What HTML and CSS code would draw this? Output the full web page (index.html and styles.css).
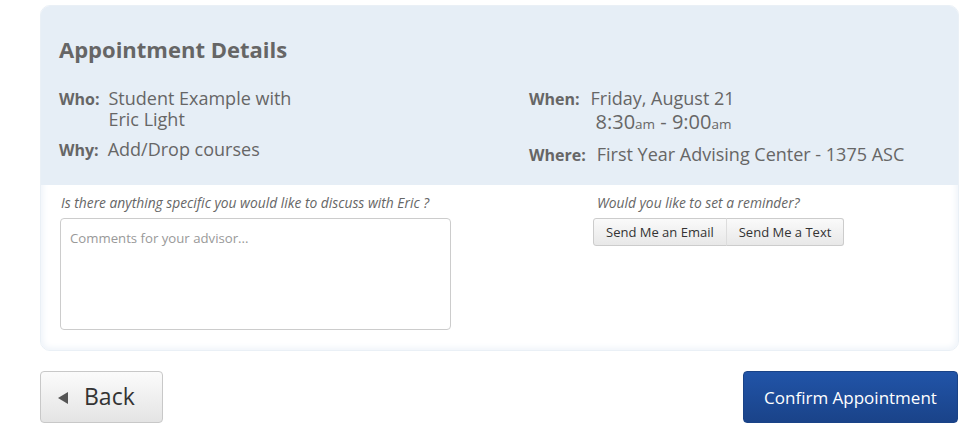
FILE: index.html
```html
<!DOCTYPE html>
<html>
<head>
<meta charset="utf-8">
<link rel="stylesheet" href="styles.css">
</head>
<body>
<div class="page">
  <section class="card">
    <div class="card-head">
      <h1 class="title">Appointment Details</h1>
      <div class="details">
        <div class="col">
          <div class="row"><span class="label">Who:</span><span class="value">Student Example with<br>Eric Light</span></div>
          <div class="row row-why"><span class="label">Why:</span><span class="value">Add/Drop courses</span></div>
        </div>
        <div class="col col-right">
          <div class="row"><span class="label">When:</span><span class="value">Friday, August 21<span class="time">8:30<small>am</small> - 9:00<small>am</small></span></span></div>
          <div class="row row-where"><span class="label">Where:</span><span class="value">First Year Advising Center - 1375 ASC</span></div>
        </div>
      </div>
    </div>
    <div class="card-body">
      <div class="col col-comment">
        <p class="prompt">Is there anything specific you would like to discuss with Eric ?</p>
        <textarea class="comments" placeholder="Comments for your advisor..."></textarea>
      </div>
      <div class="col col-remind">
        <p class="prompt">Would you like to set a reminder?</p>
        <div class="btn-group">
          <button class="btn-sm">Send Me an Email</button><button class="btn-sm">Send Me a Text</button>
        </div>
      </div>
    </div>
  </section>
  <div class="actions">
    <button class="btn-back"><span class="tri"></span>Back</button>
    <button class="btn-confirm">Confirm Appointment</button>
  </div>
</div>
</body>
</html>
```

FILE: styles.css
```css
* { box-sizing: border-box; }
body {
  margin: 0;
  background: #fff;
  font-family: "Open Sans", "Liberation Sans", sans-serif;
  color: #666;
}
.page {
  padding: 5px 17px 0 40px;
}
.card {
  border-radius: 10px;
  overflow: hidden;
  box-shadow: inset 0 0 6px 2px #eef3f9;
  border: 1px solid #eaf0f6;
}
.card-head {
  background: #e6eef6;
  padding: 28px 19px 19px 18px;
}
.title {
  margin: 0 0 24px;
  font-size: 22px;
  font-weight: 700;
  color: #666;
  line-height: 30px;
}
.details {
  display: flex;
}
.details .col { width: 470px; flex-shrink: 0; }
.details .col-right { flex: 1; }
.row {
  display: flex;
  align-items: baseline;
}
.label {
  font-weight: 700;
  font-size: 16px;
  line-height: 21px;
  color: #666;
  margin-right: 9px;
}
.value {
  font-size: 18px;
  line-height: 21px;
  color: #666;
}
.row-why { margin-top: 9px; }
.col-right .value { margin-left: 2px; }
.time {
  display: block;
  padding-left: 5px;
  font-size: 20px;
  line-height: 26px;
}
.time small { font-size: 13.5px; }
.row-where { margin-top: 7px; }
.row-where .value { margin-left: 2px; }

.card-body {
  display: flex;
  padding: 10px 19px 20px 19px;
}
.col-comment { width: 536px; flex-shrink: 0; }
.col-remind { flex: 1; }
.prompt {
  margin: 0 0 7px 1px;
  font-size: 13.8px;
  font-style: italic;
  color: #666;
  line-height: 16px;
}
.comments {
  display: block;
  width: 391px;
  height: 112px;
  border: 1px solid #ccc;
  border-radius: 4px;
  padding: 10px 9px;
  font-family: "Open Sans", "Liberation Sans", sans-serif;
  font-size: 13.2px;
  color: #666;
  resize: none;
  background: #fff;
}
.comments::placeholder { color: #999; }
.btn-group { display: flex; margin-left: -3px; }
.btn-sm {
  height: 28px;
  padding: 0 12px;
  font-family: "Open Sans", "Liberation Sans", sans-serif;
  font-size: 13px;
  color: #333;
  background: linear-gradient(#fafafa, #e8e8e8);
  border: 1px solid #ccc;
  border-radius: 3px 0 0 3px;
}
.btn-sm + .btn-sm {
  border-left: 1px solid #ddd;
  border-radius: 0 3px 3px 0;
  margin-left: -1px;
}
.actions {
  display: flex;
  justify-content: space-between;
  margin-top: 20px;
  padding-right: 1px;
}
.btn-back {
  display: flex;
  align-items: center;
  width: 123px;
  height: 52px;
  padding: 0 0 2px 17px;
  font-family: "Open Sans", "Liberation Sans", sans-serif;
  font-size: 23px;
  color: #333;
  background: linear-gradient(#fbfbfb, #e4e4e4);
  border: 1px solid #c8c8c8;
  border-radius: 4px;
}
.tri {
  width: 0;
  height: 0;
  border-top: 6px solid transparent;
  border-bottom: 6px solid transparent;
  border-right: 10px solid #555;
  margin-right: 16px;
  margin-top: 3px;
}
.btn-confirm {
  width: 215px;
  height: 52px;
  font-family: "Open Sans", "Liberation Sans", sans-serif;
  font-size: 17px;
  color: #fff;
  background: linear-gradient(#2154a8, #1a4389);
  border: 1px solid #1a4387;
  border-radius: 4px;
}
```
